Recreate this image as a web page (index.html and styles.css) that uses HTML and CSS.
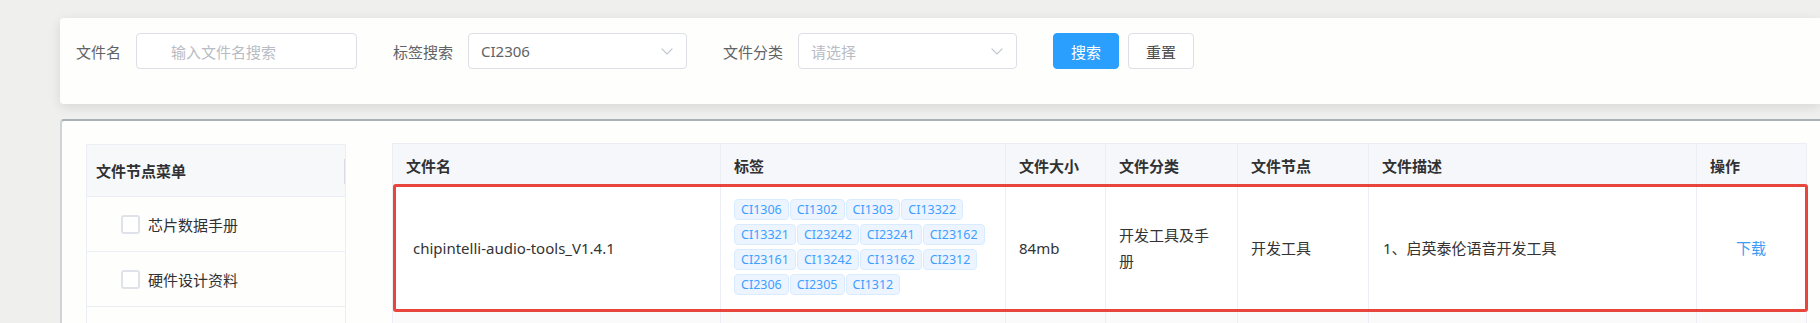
FILE: index.html
```html
<!DOCTYPE html>
<html lang="zh-CN">
<head>
<meta charset="utf-8">
<title>文件列表</title>
<link rel="stylesheet" href="styles.css">
</head>
<body>
<div class="page">
  <div class="search-card">
    <div class="form-item">
      <span class="form-label">文件名</span>
      <div class="field field-input"><span class="placeholder">输入文件名搜索</span></div>
    </div>
    <div class="form-item">
      <span class="form-label">标签搜索</span>
      <div class="field field-select">
        <span class="value">CI2306</span>
        <svg class="chevron" width="12" height="7" viewBox="0 0 12 7"><polyline points="0.6,0.6 6,6 11.4,0.6" fill="none" stroke="#c0c4cc" stroke-width="1.2"/></svg>
      </div>
    </div>
    <div class="form-item">
      <span class="form-label">文件分类</span>
      <div class="field field-select">
        <span class="placeholder">请选择</span>
        <svg class="chevron" width="12" height="7" viewBox="0 0 12 7"><polyline points="0.6,0.6 6,6 11.4,0.6" fill="none" stroke="#c0c4cc" stroke-width="1.2"/></svg>
      </div>
    </div>
    <div class="buttons">
      <button class="btn btn-primary">搜索</button>
      <button class="btn btn-default">重置</button>
    </div>
  </div>

  <div class="main-card">
    <aside class="node-menu">
      <div class="menu-head">文件节点菜单</div>
      <div class="menu-row"><span class="checkbox"></span><span class="menu-text">芯片数据手册</span></div>
      <div class="menu-row"><span class="checkbox"></span><span class="menu-text">硬件设计资料</span></div>
      <div class="menu-row menu-row-last"></div>
    </aside>

    <div class="file-table">
      <div class="t-row t-head">
        <div class="cell">文件名</div>
        <div class="cell">标签</div>
        <div class="cell">文件大小</div>
        <div class="cell">文件分类</div>
        <div class="cell">文件节点</div>
        <div class="cell">文件描述</div>
        <div class="cell">操作</div>
      </div>
      <div class="t-row t-data highlighted">
        <div class="cell cell-name">chipintelli-audio-tools_V1.4.1</div>
        <div class="cell cell-tags">
          <div class="tags">
            <span class="tag">CI1306</span><span class="tag">CI1302</span><span class="tag">CI1303</span><span class="tag">CI13322</span>
            <span class="tag">CI13321</span><span class="tag">CI23242</span><span class="tag">CI23241</span><span class="tag">CI23162</span>
            <span class="tag">CI23161</span><span class="tag">CI13242</span><span class="tag">CI13162</span><span class="tag">CI2312</span>
            <span class="tag">CI2306</span><span class="tag">CI2305</span><span class="tag">CI1312</span>
          </div>
        </div>
        <div class="cell">84mb</div>
        <div class="cell cell-wrap">开发工具及手册</div>
        <div class="cell">开发工具</div>
        <div class="cell cell-desc">1、启英泰伦语音开发工具</div>
        <div class="cell cell-op"><a class="link">下载</a></div>
      </div>
      <div class="t-row t-stripe">
        <div class="cell"></div><div class="cell"></div><div class="cell"></div><div class="cell"></div><div class="cell"></div><div class="cell"></div><div class="cell"></div>
      </div>
    </div>
  </div>
</div>
</body>
</html>
```

FILE: styles.css
```css
html, body {
  margin: 0;
  padding: 0;
  overflow: hidden;
  background: #efefed;
}

body {
  font-family: "Noto Sans", "Noto Sans CJK SC", sans-serif;
  font-size: 15px;
  color: #333;
}

.page {
  width: 1820px;
  height: 323px;
  box-sizing: border-box;
  overflow: hidden;
  padding: 18px 0 0 60px;
}

/* search card */
.search-card {
  width: 1760px;
  box-sizing: border-box;
  background: #fefefd;
  border-radius: 4px 0 0 4px;
  box-shadow: 0 3px 12px rgba(0, 0, 0, 0.1);
  padding: 15px 16px 35px;
  display: flex;
  align-items: center;
}

.form-item {
  display: flex;
  align-items: center;
  margin-right: 36px;
}

.form-label {
  color: #606266;
  margin-right: 15px;
  white-space: nowrap;
}

.field {
  height: 36px;
  box-sizing: border-box;
  border: 1px solid #dcdfe6;
  border-radius: 4px;
  background: #fff;
  display: flex;
  align-items: center;
}

.field-input {
  width: 221px;
  padding-left: 34px;
}

.field-select {
  width: 219px;
  padding: 0 13px 0 12px;
  justify-content: space-between;
}

.placeholder {
  color: #b8bcc4;
}

.value {
  color: #606266;
}

.chevron {
  display: block;
}

.buttons {
  display: flex;
  gap: 9px;
}

.btn {
  width: 66px;
  height: 36px;
  border-radius: 4px;
  font-family: inherit;
  font-size: 15px;
  padding: 0;
  cursor: pointer;
}

.btn-primary {
  background: #2b9ffd;
  border: 1px solid #2b9ffd;
  color: #fff;
}

.btn-default {
  background: #fff;
  border: 1px solid #dcdfe6;
  color: #4a4a4a;
}

/* main card */
.main-card {
  margin-top: 15px;
  width: 1760px;
  height: 204px;
  box-sizing: border-box;
  overflow: hidden;
  background: #fefefd;
  border-top: 2px solid #a9b1b8;
  border-left: 2px solid #cfd3d7;
  border-radius: 4px 0 0 0;
  padding: 23px 0 0 24px;
  display: flex;
  align-items: flex-start;
}

.node-menu {
  width: 260px;
  flex: none;
  box-sizing: border-box;
  border: 1px solid #ebeef5;
  border-bottom: none;
  margin-right: 46px;
}

.menu-head {
  position: relative;
  height: 52px;
  box-sizing: border-box;
  background: #f7f8fa;
  border-bottom: 1px solid #ebeef5;
  padding-left: 9px;
  display: flex;
  align-items: center;
  font-weight: bold;
  color: #303133;
}

.menu-head::after {
  content: "";
  position: absolute;
  right: 0;
  top: 14px;
  width: 1px;
  height: 25px;
  background: #d9dce1;
}

.menu-row {
  height: 55px;
  box-sizing: border-box;
  border-bottom: 1px solid #ebeef5;
  display: flex;
  align-items: center;
  padding-left: 34px;
}

.checkbox {
  width: 19px;
  height: 19px;
  box-sizing: border-box;
  border: 2px solid #dfe3e9;
  border-radius: 3px;
  background: #fff;
  margin-right: 8px;
}

.menu-text {
  color: #303133;
}

/* file table */
.file-table {
  width: 1415px;
  flex: none;
  box-sizing: border-box;
  border: 1px solid #ebeef5;
  border-bottom: none;
  margin-top: -1px;
}

.t-row {
  display: grid;
  grid-template-columns: 328px 285px 100px 132px 131px 328px 109px;
}

.cell {
  box-sizing: border-box;
  border-right: 1px solid #ebeef5;
  border-bottom: 1px solid #ebeef5;
  padding: 0 14px 0 13px;
  display: flex;
  align-items: center;
}

.cell:last-child {
  border-right: none;
}

.t-head .cell {
  height: 41px;
  background: #f5f7fa;
  font-weight: bold;
  color: #303133;
  padding-top: 3px;
}

.t-data {
  position: relative;
  background: #fff;
}

.t-data .cell {
  min-height: 125px;
  color: #333;
}

.t-data .cell-name {
  padding-left: 20px;
}

.t-data .cell-wrap {
  line-height: 26px;
  padding-right: 18px;
}

.cell-tags {
  padding: 14px 0 15px 13px;
}

.tags {
  width: 272px;
  display: flex;
  flex-wrap: wrap;
  column-gap: 1px;
  row-gap: 4px;
}

.tag {
  height: 21px;
  box-sizing: border-box;
  padding: 0 6px;
  border: 1px solid #d9ecff;
  border-radius: 4px;
  background: #ecf5ff;
  color: #409eff;
  font-size: 12.5px;
  line-height: 19px;
  white-space: nowrap;
}

.cell-desc {
  padding-left: 14px;
}

.cell-op {
  justify-content: center;
}

.link {
  color: #3d9cf6;
  cursor: pointer;
}

.highlighted::after {
  content: "";
  position: absolute;
  top: -1px;
  left: 0;
  right: -2px;
  bottom: -1px;
  border: 3px solid #e8463c;
  border-radius: 3px;
  pointer-events: none;
}

.t-stripe .cell {
  height: 40px;
  background: #fafafa;
}
```
